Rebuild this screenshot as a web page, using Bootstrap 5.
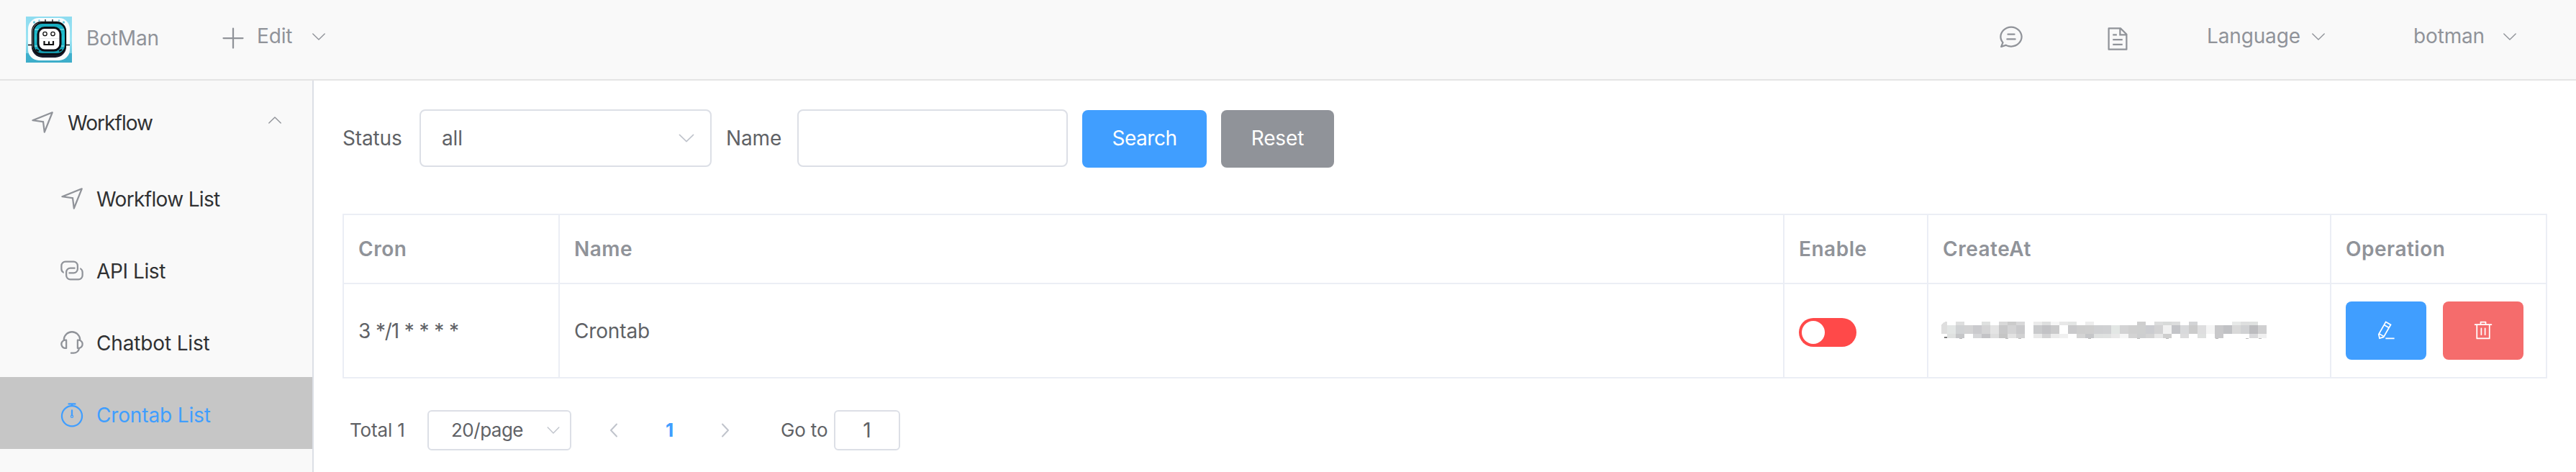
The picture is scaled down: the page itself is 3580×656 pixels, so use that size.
<!DOCTYPE html>
<html lang="en">
<head>
<meta charset="utf-8">
<meta name="viewport" content="width=device-width, initial-scale=1">
<title>BotMan</title>
<link rel="stylesheet" href="https://cdn.jsdelivr.net/npm/bootstrap@5.3.0/dist/css/bootstrap.min.css">
<style>
:root{--ink:#303133;--regular:#606266;--muted:#909399;--line:#dcdfe6;--hint:#c0c4cc;--primary:#409eff}
body{font-family:Inter,"Liberation Sans",sans-serif;font-size:28px;line-height:36px;letter-spacing:-.15px;color:var(--regular);background:#fff;overflow:hidden}
svg{display:block;flex:none}
.ico{width:36px;height:36px;fill:currentColor}
.chev{width:24px;height:24px;fill:none;stroke:currentColor;stroke-width:1.4;stroke-linecap:round;stroke-linejoin:round}
.topbar{height:112px;padding:0 80px 0 36px;background:#f9f9f9;border-bottom:2px solid #e4e4e4;color:var(--muted);white-space:nowrap}
.brand{margin:0 0 4px 20px;width:103px}
.plus{margin:0 0 5px 83px}
.edit{margin:0 0 10px 15px;width:55px}
.topbar .chev{margin-bottom:9px}
.doc{margin:0 0 2px 112px}
.lang{margin:0 14px 10px 106px;width:129px}
.user{margin:0 23px 10px 120px;width:99px}
.shell{height:544px}
.side{width:436px;background:#f9f9f9;border-right:2px solid var(--line);flex:none}
.side a{height:100px;padding:4px 0 0 82px;color:var(--ink);text-decoration:none;flex-wrap:nowrap}
.side a .ico{color:var(--muted)}
.side a span{padding:2px 0 0;margin-left:16px}
.side a.parent{height:112px;padding-left:41px;padding-right:40px}
.side a.parent span{letter-spacing:-.95px;margin-left:17px}
.side a.parent .chev{color:var(--muted);margin-bottom:6px}
.side a.current{background:#c6c6c6;color:var(--primary)}
.side a.current .ico{color:var(--primary)}
.main{padding:40px 40px 0;min-width:0}
.filters{height:80px}
.field{height:80px;border:2px solid var(--line);border-radius:8px;background:#fff;font-size:28px;color:var(--regular);padding:0 19px 0 29px}
.act{height:80px;border:0;border-radius:8px;font-size:28px;padding:0 0 2px;color:#fff;letter-spacing:-.1px}
.act-blue,.act-blue:hover{background:var(--primary)}
.act-grey,.act-grey:hover{background:var(--muted)}
.act-red,.act-red:hover{background:#f56c6c}
.jobs{margin:65px 0 0;width:3064px;table-layout:fixed;border-collapse:collapse;color:var(--regular)}
.table.jobs>:not(caption)>*>*{border:2px solid #ebeef5;padding:0 20px;vertical-align:middle;box-shadow:none;color:inherit}
.table.jobs>:not(caption)>*{border-width:0}
.jobs thead tr{height:96px;color:var(--muted)}
.jobs thead th{font-weight:600;letter-spacing:.5px}
.jobs tbody tr{height:131px}
.toggle{width:80px;height:40px;border-radius:20px;background:#ff4949;padding:4px;margin-top:5px}
.knob{width:32px;height:32px;border-radius:50%;background:#fff}
.row-act{width:112px;height:81px}
.row-act svg{width:28px;height:28px;fill:#fff;margin:0 auto}
.masked{margin:-1px 0 0 -2px;shape-rendering:crispEdges}
.pager{margin-top:44px;height:56px;padding-left:10px;font-size:26px}
.pager .field{height:56px;font-size:26px;border-radius:6px}
</style>
</head>
<body>
<header class="topbar d-flex align-items-center">
  <svg width="64" height="64" viewBox="0 0 64 64" aria-label="BotMan logo">
    <defs><linearGradient id="sky" x1="0" y1="0" x2="0" y2="1"><stop offset="0" stop-color="#8edcf0"/><stop offset=".5" stop-color="#9be3f3"/><stop offset=".79" stop-color="#72cfe4"/><stop offset=".8" stop-color="#3fb0cd"/><stop offset="1" stop-color="#3dadc9"/></linearGradient>
    <linearGradient id="ring" x1="0" y1="0" x2="0" y2="1"><stop offset="0" stop-color="#17a9bd"/><stop offset=".5" stop-color="#22c3d3"/><stop offset="1" stop-color="#1495ab"/></linearGradient></defs>
    <rect width="64" height="64" fill="url(#sky)"/>
    <rect x="3" y="2" width="58" height="59" rx="15" fill="#f9fcfd"/>
    <g fill="#6cc9df"><circle cx="11.500" cy="8" r="1.700"/><circle cx="18.500" cy="5.500" r="1.200"/><circle cx="46" cy="5.500" r="1.200"/><circle cx="52.500" cy="8" r="1.700"/></g>
    <path d="M27 4v5M37 4v5M3 39.500h8M54 39.500h7" stroke="#0b0d12" stroke-width="1.300"/>
    <rect x="8" y="10" width="48" height="47" rx="15" fill="#14182a"/>
    <rect x="8.500" y="7.500" width="47" height="45" rx="13" fill="#e9eef0" stroke="#0b0d12" stroke-width="1.300"/>
    <rect x="10.500" y="9" width="44.500" height="43" rx="12" fill="url(#ring)" stroke="#0b0d12" stroke-width="2"/>
    <path d="M12 18h6M47 18h6M12 41h5M48 41h5" stroke="#a5f1f4" stroke-width="1"/>
    <path d="M14 46l4 2M50 46l-4 2" stroke="#0b0d12" stroke-width="2.200"/>
    <rect x="17" y="15.500" width="31" height="31.500" rx="9" fill="#fff" stroke="#0a0c14" stroke-width="3"/>
    <path d="M19 30.500h27" stroke="#e9ecee" stroke-width="1"/>
    <g fill="none" stroke="#111"><circle cx="26.500" cy="24" r="2.700" stroke-width="1.300"/><circle cx="37.500" cy="24" r="2.700" stroke-width="1.300"/><path d="M25.500 34v5h12.500v-5M32 34.500v4" stroke-width="2.200"/></g>
  </svg>
  <span class="brand">BotMan</span>
  <svg class="ico plus" viewBox="0 0 1024 1024"><path d="M480 480V128a32 32 0 0 1 64 0v352h352a32 32 0 1 1 0 64H544v352a32 32 0 1 1-64 0V544H128a32 32 0 0 1 0-64h352z"/></svg>
  <span class="edit">Edit</span>
  <svg class="chev" style="margin-left:19px" viewBox="0 0 24 24"><path d="M3.800 8l8.200 8 8.200-8"/></svg>
  <svg class="ico ms-auto mb-2" viewBox="0 0 1024 1024"><path d="m174.720 855.680 135.296-45.120 23.680 11.840C388.096 849.536 448.576 864 512 864c211.840 0 384-166.784 384-352S723.840 160 512 160 128 326.784 128 512c0 69.120 24.960 139.264 70.848 199.232l22.080 28.800-46.272 115.584zm-45.248 82.560A32 32 0 0 1 89.600 896l58.368-145.920C94.720 680.320 64 596.864 64 512 64 299.904 256 96 512 96s448 203.904 448 416-192 416-448 416a461.056 461.056 0 0 1-206.912-48.384l-175.616 58.560z"/><path d="M352 576h320q32 0 32 32t-32 32H352q-32 0-32-32t32-32zm32-192h256q32 0 32 32t-32 32H384q-32 0-32-32t32-32z"/></svg>
  <svg class="ico doc" viewBox="0 0 1024 1024"><path d="M832 384H576V128H192v768h640V384zm-26.496-64L640 154.496V320h165.504zM160 64h480l256 256v608a32 32 0 0 1-32 32H160a32 32 0 0 1-32-32V96a32 32 0 0 1 32-32zm160 448h384v64H320v-64zm0-192h160v64H320v-64zm0 384h384v64H320v-64z"/></svg>
  <span class="lang">Language</span>
  <svg class="chev" viewBox="0 0 24 24"><path d="M3.800 8l8.200 8 8.200-8"/></svg>
  <span class="user">botman</span>
  <svg class="chev" viewBox="0 0 24 24"><path d="M3.800 8l8.200 8 8.200-8"/></svg>
</header>

<div class="shell d-flex">
  <nav class="side d-flex flex-column">
    <a href="#" class="parent d-flex align-items-center">
      <svg class="ico" viewBox="0 0 1024 1024"><path d="m249.600 417.088 319.744 43.072 39.168 310.272L845.120 178.880 249.600 417.088zm-129.024 47.168a32 32 0 0 1-7.680-61.440l777.792-311.040a32 32 0 0 1 41.600 41.600l-310.720 775.680a32 32 0 0 1-61.440-7.808L512 516.992l-391.424-52.736z"/></svg>
      <span>Workflow</span>
      <svg class="chev ms-auto" viewBox="0 0 24 24"><path d="M3.800 16l8.200-8 8.200 8"/></svg>
    </a>
    <a href="#" class="d-flex align-items-center">
      <svg class="ico" viewBox="0 0 1024 1024"><path d="m249.600 417.088 319.744 43.072 39.168 310.272L845.120 178.880 249.600 417.088zm-129.024 47.168a32 32 0 0 1-7.680-61.440l777.792-311.040a32 32 0 0 1 41.600 41.600l-310.720 775.680a32 32 0 0 1-61.440-7.808L512 516.992l-391.424-52.736z"/></svg>
      <span style="letter-spacing:-.65px">Workflow List</span>
    </a>
    <a href="#" class="d-flex align-items-center">
      <svg class="ico" viewBox="0 0 1024 1024"><path d="M640 384v64H448a128 128 0 0 0-128 128v128a128 128 0 0 0 128 128h320a128 128 0 0 0 128-128V576a128 128 0 0 0-64-110.848V394.880c74.560 26.368 128 97.472 128 181.056v128a192 192 0 0 1-192 192H448a192 192 0 0 1-192-192V576a192 192 0 0 1 192-192h192z"/><path d="M384 640v-64h192a128 128 0 0 0 128-128V320a128 128 0 0 0-128-128H256a128 128 0 0 0-128 128v128a128 128 0 0 0 64 110.848v70.272A192.064 192.064 0 0 1 64 448V320a192 192 0 0 1 192-192h320a192 192 0 0 1 192 192v128a192 192 0 0 1-192 192H384z"/></svg>
      <span style="letter-spacing:-.4px">API List</span>
    </a>
    <a href="#" class="d-flex align-items-center">
      <svg class="ico" viewBox="0 0 1024 1024"><path d="M864 409.600a192 192 0 0 1-37.888 349.440A256.064 256.064 0 0 1 576 960h-96a32 32 0 1 1 0-64h96a192.064 192.064 0 0 0 181.120-128H736a32 32 0 0 1-32-32V416a32 32 0 0 1 32-32h32c10.368 0 20.544.832 30.528 2.432a288 288 0 0 0-573.056 0A193.235 193.235 0 0 1 256 384h32a32 32 0 0 1 32 32v320a32 32 0 0 1-32 32h-32a192 192 0 0 1-96-358.400 352 352 0 0 1 704 0zM256 448a128 128 0 1 0 0 256V448zm640 128a128 128 0 0 0-128-128v256a128 128 0 0 0 128-128z"/></svg>
      <span>Chatbot List</span>
    </a>
    <a href="#" class="current d-flex align-items-center">
      <svg class="ico" viewBox="0 0 1024 1024"><circle cx="512" cy="576" r="400" fill="none" stroke="currentColor" stroke-width="64"/><path d="M512 320a32 32 0 0 1 32 32l-.512 192a32 32 0 1 1-64 0L480 352a32 32 0 0 1 32-32z"/><circle cx="512" cy="588" r="46" fill="none" stroke="currentColor" stroke-width="34"/><path d="M544 128v64h-64v-64h-96a32 32 0 0 1 0-64h256a32 32 0 1 1 0 64z"/></svg>
      <span>Crontab List</span>
    </a>
  </nav>

  <main class="main flex-grow-1">
    <form class="filters d-flex align-items-center">
      <label style="width:108px">Status</label>
      <div class="field d-flex align-items-center justify-content-between" style="width:406px;margin-left:-1px"><span>all</span>
        <svg class="chev" style="width:28px;height:28px;color:var(--hint)" viewBox="0 0 24 24"><path d="M3.800 8l8.200 8 8.200-8"/></svg></div>
      <label style="margin-left:20px;width:99px">Name</label>
      <input class="field" type="text" style="width:376px">
      <button type="button" class="btn act act-blue" style="width:173px;margin:2px 0 0 20px;letter-spacing:-.5px">Search</button>
      <button type="button" class="btn act act-grey" style="width:157px;margin:2px 0 0 20px">Reset</button>
    </form>

    <table class="table jobs">
      <colgroup><col style="width:300px"><col style="width:1702px"><col style="width:200px"><col style="width:560px"><col style="width:300px"></colgroup>
      <thead><tr><th>Cron</th><th>Name</th><th>Enable</th><th>CreateAt</th><th>Operation</th></tr></thead>
      <tbody><tr>
        <td style="letter-spacing:-1.15px;word-spacing:1.1px">3 */1 * * * *</td>
        <td>Crontab</td>
        <td><div class="toggle"><div class="knob"></div></div></td>
        <td><svg class="masked" id="stamp" width="452" height="24" viewBox="-8 0 452 24"><path d="M0 0C-5 0-8 3-8 7v10h8z" fill="#dedede"/></svg></td>
        <td><div class="d-flex" style="gap:23px">
          <button type="button" class="btn act act-blue row-act"><svg viewBox="0 0 1024 1024"><path d="m199.040 672.640 193.984 112 224-387.968-193.920-112-224 388.032zm-23.872 60.160 32.896 148.288 144.896-45.696L175.168 732.800zM455.040 229.248l193.920 112 56.704-98.112-193.984-112-56.640 98.112zM104.320 708.800l384-665.024 304.768 175.936L409.152 884.800h.064l-248.448 78.336L104.320 708.800zm384 254.272v-64h448v64h-448z"/></svg></button>
          <button type="button" class="btn act act-red row-act"><svg viewBox="0 0 1024 1024"><path d="M160 256H96a32 32 0 0 1 0-64h256V95.936a32 32 0 0 1 32-32h256a32 32 0 0 1 32 32V192h256a32 32 0 1 1 0 64h-64v672a32 32 0 0 1-32 32H192a32 32 0 0 1-32-32V256zm448-64v-64H416v64h192zM224 896h576V256H224v640zm192-128a32 32 0 0 1-32-32V416a32 32 0 0 1 64 0v320a32 32 0 0 1-32 32zm192 0a32 32 0 0 1-32-32V416a32 32 0 0 1 64 0v320a32 32 0 0 1-32 32z"/></svg></button>
        </div></td>
      </tr></tbody>
    </table>

    <div class="pager d-flex align-items-center">
      <span style="width:108px">Total 1</span>
      <div class="field d-flex align-items-center justify-content-between" style="width:200px;padding:0 11px 0 31px"><span style="letter-spacing:-.5px">20/page</span>
        <svg class="chev" style="color:var(--hint)" viewBox="0 0 24 24"><path d="M4.200 8l7.800 8 7.800-8"/></svg></div>
      <svg class="chev" style="margin-left:47px;color:var(--hint);stroke-width:2" viewBox="0 0 24 24"><path d="M16 3.500L8 12l8 8.500"/></svg>
      <span class="text-center" style="width:131px;font-weight:700;color:var(--primary)">1</span>
      <svg class="chev" style="color:var(--hint);stroke-width:2" viewBox="0 0 24 24"><path d="M8 3.500l8 8.500-8 8.500"/></svg>
      <span style="margin-left:65px;width:74px">Go to</span>
      <input class="field text-center" type="text" value="1" style="width:92px;padding:0;font-size:28px">
    </div>
  </main>
</div>

<script>
// Masked timestamp: one entry per 12px block, colours for the top, middle and bottom strips.
const blocks = [
  ['', 'e3e6e5', 'dfe1e0'], ['dedfdf', 'd0d2d4', 'c5c6c8'], ['', 'd3d3d4', ''], ['', 'cacacd', 'd5d6d8'],
  ['dfe1e0', 'd4d4d5', 'c3c3c6'], ['', 'e4e4e4', 'dedede'], ['d8d8d8', 'c8c8c9', 'c5c5c5'], ['cbcbcb', 'd3d3d4', 'e2e2e2'],
  ['d8d8d9', 'c9c9cb', 'd1d1d2'], ['', '', ''], ['ebebeb', 'c9cacc', 'e9e9e9'], ['dedfdf', 'c2c2c5', 'd3d3d4'],
  ['f6f6f6', 'cacacb', 'ebebeb'], ['e8e8e8', '', 'f0f0f0'], ['e3e5e4', 'c9c9cb', ''], ['', 'cdcdcd', 'd4d4d4'],
  ['ededed', 'cecece', 'c5c6c8'], ['', 'cfd0d2', 'dfe1e0'], ['', 'd0d1d3', 'e0e2e1'], ['', 'e3e7e5', 'e9e9e9'],
  ['', 'd3d3d4', 'f6f6f6'], ['', 'cfcfcf', 'd3d3d3'], ['cecece', 'cecfcf', 'cdcecf'], ['', 'cbccd0', 'd3d3d3'],
  ['dcdddd', 'd2d2d3', 'e7e7e7'], ['d8dad9', 'f1f1f1', 'cecece'], ['dcdddd', 'c3c4c8', ''], ['', 'd8d9db', 'dcdcdd'],
  ['d3d4d6', 'cbcbcb', ''], ['', 'dededf', 'dfe1e0'], ['', 'f5f5f5', ''], ['', 'c8c8ca', 'c8c8ca'],
  ['', 'c0c1c4', ''], ['e7e9e8', 'd9d9d9', ''], ['dedfdf', 'd0d1d3', ''], ['dfe1e0', 'bcbcbf', 'd9d9db'], ['', 'cfcfd0', 'f0f0f0']
];
const strips = [[0, 5], [5, 12], [17, 6]];
const stamp = document.getElementById('stamp');
const addRect = (x, y, w, h, fill) => {
  const r = document.createElementNS('http://www.w3.org/2000/svg', 'rect');
  for (const [k, v] of Object.entries({ x, y, width: w, height: h, fill })) r.setAttribute(k, v);
  stamp.append(r);
};
blocks.forEach((col, i) => col.forEach((c, s) => c && addRect(i * 12, strips[s][0], 12, strips[s][1], '#' + c)));
addRect(-4, 21, 4, 2, '#777');
[17, 81, 99, 196, 264, 304, 373, 415, 433].forEach(x => addRect(x, 23, 4, 1, '#bbb'));
</script>
<script src="https://cdn.jsdelivr.net/npm/bootstrap@5.3.0/dist/js/bootstrap.bundle.min.js"></script>
</body>
</html>
